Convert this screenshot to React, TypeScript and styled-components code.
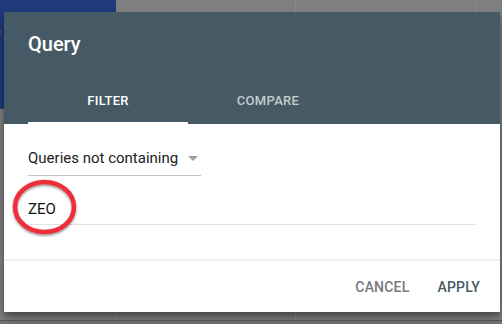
import React from "react";
import styled, { createGlobalStyle } from "styled-components";

const Global = createGlobalStyle`
  html, body { margin: 0; padding: 0; }
  body { width: 502px; height: 324px; overflow: hidden; font-family: Roboto, "Noto Sans", Arial, sans-serif; }
`;

const Page = styled.div`
  position: relative;
  width: 502px;
  height: 324px;
  background: #7f7f7f;
  overflow: hidden;
  display: grid;
  grid-template-columns: 116px 179px 180px 27px;
  grid-template-rows: 109px 211px 4px;
`;

const BluePanel = styled.div`
  background: #1f3a7b;
  color: #6f7fa8;
  font-size: 13px;
  padding-top: 24px;
  margin-left: -6px;
`;

const Column = styled.div<{ $line?: boolean }>`
  border-left: ${(p) => (p.$line ? "1px solid #8b8b8b" : "none")};
`;

const BottomRow = styled.div`
  grid-column: 1 / -1;
  border-top: 1px solid #5c5c5c;
  background: #767676;
`;

const Dialog = styled.div`
  position: absolute;
  left: 4px;
  top: 12px;
  width: 496px;
  height: 300px;
  background: #ffffff;
  display: flex;
  flex-direction: column;
  box-shadow: 0 7px 10px rgba(0, 0, 0, 0.32), 0 2px 4px rgba(0, 0, 0, 0.2);
`;

const Header = styled.div`
  background: #455a64;
  padding: 20px 24px 0;
  display: flex;
  flex-direction: column;
  gap: 20px;
`;

const Title = styled.div`
  color: #ffffff;
  font-size: 20px;
  line-height: 24px;
  font-weight: 500;
`;

const Tabs = styled.div`
  display: flex;
`;

const Tab = styled.div<{ $active?: boolean }>`
  width: 160px;
  height: 48px;
  box-sizing: border-box;
  display: flex;
  align-items: center;
  justify-content: center;
  font-size: 13px;
  font-weight: 500;
  letter-spacing: 0.3px;
  color: ${(p) => (p.$active ? "#ffffff" : "rgba(255,255,255,0.7)")};
  border-bottom: 2px solid ${(p) => (p.$active ? "#ffffff" : "transparent")};
  padding-top: 2px;
`;

const Body = styled.div`
  position: relative;
  flex: 1;
  padding: 16px 24px 0;
  display: flex;
  flex-direction: column;
  align-items: flex-start;
`;

const Select = styled.div`
  width: 173px;
  height: 36px;
  box-sizing: border-box;
  border-bottom: 1px solid #c4c4c4;
  display: flex;
  align-items: center;
  gap: 10px;
  font-size: 15px;
  white-space: nowrap;
  color: #212121;
`;

const Arrow = styled.span`
  flex: none;
  width: 0;
  height: 0;
  border-left: 5px solid transparent;
  border-right: 5px solid transparent;
  border-top: 5px solid #a0a0a0;
  margin-top: 1px;
`;

const Input = styled.div`
  margin-top: 18px;
  width: 448px;
  height: 31px;
  box-sizing: border-box;
  border-bottom: 1px solid #e2e2e2;
  display: flex;
  align-items: center;
  font-size: 15px;
  color: #111111;
`;

const Annotation = styled.svg`
  position: absolute;
  left: 6px;
  top: 40px;
  overflow: visible;
`;

const Footer = styled.div`
  height: 51px;
  border-top: 2px solid #efefef;
  display: flex;
  align-items: center;
  justify-content: flex-end;
  gap: 28px;
  padding-right: 20px;
`;

const Button = styled.button<{ $primary?: boolean }>`
  border: none;
  background: none;
  padding: 0;
  font-family: inherit;
  font-size: 14px;
  font-weight: 500;
  letter-spacing: 0.2px;
  color: ${(p) => (p.$primary ? "#455a64" : "#787878")};
`;

export default function App() {
  return (
    <>
      <Global />
      <Page>
        <BluePanel>e</BluePanel>
        <Column />
        <Column $line />
        <Column $line />
        <Column />
        <Column $line />
        <Column $line />
        <Column />
        <BottomRow />
        <Dialog>
          <Header>
            <Title>Query</Title>
            <Tabs>
              <Tab $active>FILTER</Tab>
              <Tab>COMPARE</Tab>
            </Tabs>
          </Header>
          <Body>
            <Select>
              Queries not containing
              <Arrow />
            </Select>
            <Input>ZEO</Input>
            <Annotation width="72" height="64" viewBox="0 0 72 64">
              <defs>
                <filter id="sh" x="-20%" y="-20%" width="140%" height="140%">
                  <feDropShadow dx="0" dy="1.5" stdDeviation="1.2" floodColor="#000" floodOpacity="0.45" />
                </filter>
              </defs>
              <ellipse cx="34.5" cy="43" rx="29.5" ry="25" fill="none" stroke="#ee2f3a" strokeWidth="4.5" filter="url(#sh)" />
            </Annotation>
          </Body>
          <Footer>
            <Button>CANCEL</Button>
            <Button $primary>APPLY</Button>
          </Footer>
        </Dialog>
      </Page>
    </>
  );
}
